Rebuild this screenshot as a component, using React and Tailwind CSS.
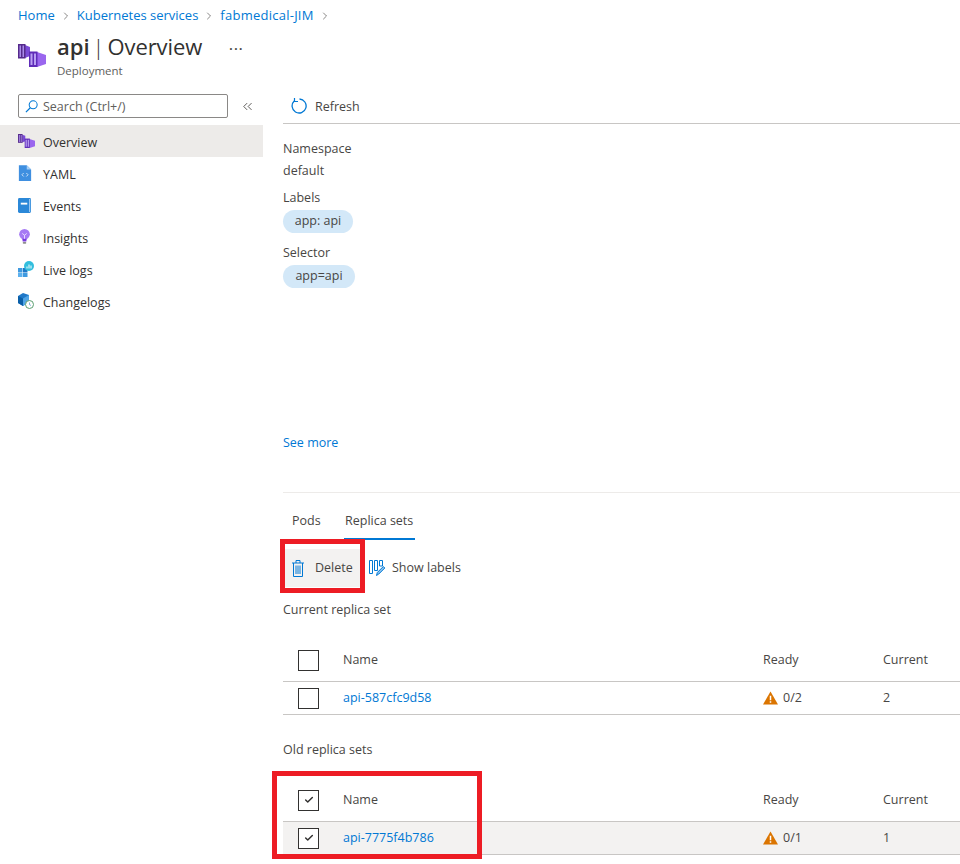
import React from "react";
import { ChevronRight, ChevronsLeft, Check } from "lucide-react";

const KubeIcon = ({ className }) => (
  <svg viewBox="0 0 28 23" className={className}>
    <path d="M7 1l5 2v9l-5 2z" fill="#7a4bd6" />
    <rect x="0" y="0" width="7.500" height="14.500" fill="#552a8c" />
    <path d="M1.500 1.500h1.500v11.500H1.500zM4.500 1.500h1.500v11.500H4.500z" fill="#a98bea" />
    <path d="M19 8l9 3v9l-9 3z" fill="#9a66ee" />
    <rect x="11" y="7.500" width="8.500" height="15.500" fill="#5f2cb8" />
    <path d="M12.500 9.500h2v11.500h-2zM16 9.500h2v11.500h-2z" fill="#b9a0f2" />
  </svg>
);

const YamlIcon = () => (
  <svg viewBox="0 0 16 18" className="w-[14px] h-4">
    <path d="M1 0h9l5 5v13H1z" fill="#3f8fe0" />
    <path d="M10 0l5 5h-5z" fill="#a8d0f5" />
    <path d="M6.500 9l-2 2 2 2M9.500 9l2 2-2 2" fill="none" stroke="#fff" strokeWidth="0.8" />
  </svg>
);

const EventsIcon = () => (
  <svg viewBox="0 0 14 16" className="w-[13px] h-[15px]">
    <rect x="0" y="0" width="14" height="16" rx="1.500" fill="#2b88d8" />
    <rect x="12" y="1" width="1.200" height="14" fill="#a8d0f5" />
    <rect x="3" y="5" width="7" height="2" fill="#fff" />
  </svg>
);

const InsightsIcon = () => (
  <svg viewBox="0 0 14 18" className="w-[13px] h-4">
    <circle cx="7" cy="6" r="6" fill="#a67af4" />
    <path d="M4.500 11h5l-.5 3H5z" fill="#773adc" />
    <rect x="5" y="14.500" width="4" height="2" rx="1" fill="#8c8c8c" />
    <path d="M4.500 5l2.500 2 2.500-2M7 7v4" fill="none" stroke="#f0e6ff" strokeWidth="1" />
  </svg>
);

const LiveLogsIcon = () => (
  <svg viewBox="0 0 16 16" className="w-4 h-4">
    <rect x="0" y="7" width="4.500" height="4.500" fill="#3f9ae0" />
    <rect x="5" y="7" width="4.500" height="4.500" fill="#1f78c8" />
    <rect x="0" y="12" width="4.500" height="4" fill="#5db1ee" />
    <rect x="5" y="12" width="4.500" height="4" fill="#3f9ae0" />
    <circle cx="11" cy="5" r="5" fill="#32bedd" />
    <path d="M9 7.500v-2M11 7.500v-4M13 7.500v-3" stroke="#fff" strokeWidth="1" />
  </svg>
);

const ChangelogsIcon = () => (
  <svg viewBox="0 0 16 16" className="w-4 h-4">
    <path d="M0 3l5-3 6 2v7l-6 4-5-3z" fill="#1f78c8" />
    <path d="M5 5.500l6-3.500v7l-6 4z" fill="#50a5e6" />
    <path d="M0 3l5 2.500v7.500l-5-3z" fill="#0a5fa8" />
    <circle cx="11.500" cy="11.500" r="4" fill="#fff" stroke="#5a9e6f" strokeWidth="1" />
    <path d="M11.500 9.500v2.200l1.500 .8" fill="none" stroke="#5e9fd0" strokeWidth="0.8" />
  </svg>
);

const SearchGlass = () => (
  <svg viewBox="0 0 14 14" className="w-[13px] h-[13px] text-[#0078d4]" fill="none" stroke="currentColor" strokeWidth="1.100">
    <circle cx="8.800" cy="5.200" r="4.300" />
    <path d="M5.700 8.300L1 13" strokeWidth="1.300" />
  </svg>
);

const RefreshIcon = () => (
  <svg viewBox="0 0 17 17" className="w-[17px] h-[17px] text-[#0078d4]" fill="none" stroke="currentColor" strokeWidth="1.300">
    <path d="M8.500 2A7 7 0 1 1 3.200 4" />
    <path d="M3.500 1v3.500H7" strokeWidth="1.200" />
  </svg>
);

const TrashIcon = () => (
  <svg viewBox="0 0 12 17" className="w-3 h-[17px] text-[#0078d4]" fill="none" stroke="currentColor" strokeWidth="1">
    <path d="M0 3h12M4 3V.5h4V3M1.500 3v13.500h9V3" />
    <path d="M4 5.500v8.500M6 5.500v8.500M8 5.500v8.500" />
  </svg>
);

const ShowLabelsIcon = () => (
  <svg viewBox="0 0 16 16" className="w-4 h-4 text-[#0078d4]" fill="none" stroke="currentColor" strokeWidth="1">
    <path d="M.5 .5h3v13h-3zM5.500 .5h3v10h-3zM10.500 .5h3v5.500h-3z" />
    <path d="M7.500 15.500l.8-3 6-6 1.500 1.500-6 6z" fill="#8cc4f0" />
  </svg>
);

const navItems = [
  { label: "Overview", icon: <KubeIcon className="w-[17px] h-[14px]" />, active: true },
  { label: "YAML", icon: <YamlIcon /> },
  { label: "Events", icon: <EventsIcon /> },
  { label: "Insights", icon: <InsightsIcon /> },
  { label: "Live logs", icon: <LiveLogsIcon /> },
  { label: "Changelogs", icon: <ChangelogsIcon /> },
];

const Checkbox = ({ checked }) => (
  <span className="w-[21px] h-[21px] border border-[#323130] flex items-center justify-center bg-white shrink-0">
    {checked && <Check size={10} strokeWidth={3.5} className="text-[#323130]" />}
  </span>
);

const WarningIcon = () => (
  <svg viewBox="0 0 16 14" className="w-[15px] h-[14px]">
    <path d="M8 0l8 14H0z" fill="#db7500" />
    <path d="M7.200 4.500h1.600v5H7.200zM7.200 10.500h1.600v1.600H7.200z" fill="#fff" />
  </svg>
);

const ReplicaTable = ({ name, ready, current, checked }) => (
  <div>
    <div className="h-[43px] flex items-center border-b border-[#c8c6c4] pl-[15px] font-medium text-[#484644]">
      <Checkbox checked={checked} />
      <span className="ml-6 w-[420px]">Name</span>
      <span className="w-[120px]">Ready</span>
      <span>Current</span>
    </div>
    <div className={`h-[33px] flex items-center border-b border-[#c8c6c4] pl-[15px] ${checked ? "bg-[#f3f2f1]" : ""}`}>
      <Checkbox checked={checked} />
      <a className={`ml-6 w-[420px] text-[#0078d4] ${checked ? "font-medium" : ""}`}>{name}</a>
      <span className="w-[120px] flex items-center gap-[5px] text-[#484644]">
        <WarningIcon />
        {ready}
      </span>
      <span className="text-[#484644]">{current}</span>
    </div>
  </div>
);

export default function App() {
  return (
    <div className="relative w-[960px] h-[864px] overflow-hidden bg-white text-[12.500px] text-[#323130] font-['Open_Sans','Noto_Sans',sans-serif]">
      {/* breadcrumb */}
      <div className="h-[32px] pl-[18px] flex items-center gap-[5px] text-[13px] text-[#0078d4]">
        <a>Home</a>
        <ChevronRight size={12} strokeWidth={1.3} className="text-[#484644]" />
        <a>Kubernetes services</a>
        <ChevronRight size={12} strokeWidth={1.3} className="text-[#484644]" />
        <a className="tracking-[0.25px]">fabmedical-JIM</a>
        <ChevronRight size={12} strokeWidth={1.3} className="text-[#484644]" />
      </div>

      {/* title */}
      <div className="h-[50px] pl-[18px] flex items-start">
        <KubeIcon className="w-[28px] h-[23px] mt-[12px]" />
        <div className="ml-[11px] -mt-[1px]">
          <div className="text-[22px] leading-[30px] text-[#323130] flex">
            <span className="font-semibold">api</span>
            <span className="mx-[3px] font-light">|</span>
            <span className="tracking-[-0.1px]">Overview</span>
          </div>
          <div className="text-[11.500px] leading-[16px] mt-[2px] text-[#605e5c]">Deployment</div>
        </div>
        <span className="ml-[27px] mt-[2px] text-[14px] font-semibold text-[#484644] tracking-[1px]">...</span>
      </div>

      <div className="flex">
        {/* sidebar */}
        <div className="w-[263px] shrink-0 pt-[12px]">
          <div className="flex items-center pl-[18px] mb-[7px]">
            <div className="w-[210px] h-[24px] border border-[#8a8886] rounded-[2px] flex items-center pl-[6px] gap-[5px] text-[#605e5c]">
              <SearchGlass />
              <span className="pt-[3px]">Search (Ctrl+/)</span>
            </div>
            <ChevronsLeft size={15} strokeWidth={1.4} className="ml-[12px] text-[#484644]" />
          </div>
          {navItems.map((item) => (
            <div
              key={item.label}
              className={`h-[32px] flex items-center pl-[18px] ${item.active ? "bg-[#edebe9]" : ""}`}
            >
              <span className="w-[25px] flex items-center">{item.icon}</span>
              <span className="pt-[5px]">{item.label}</span>
            </div>
          ))}
        </div>

        {/* main */}
        <div className="flex-1 pl-[20px] min-w-0">
          <div className="h-[32px] mt-[10px] border-b border-[#c8c6c4] flex items-center pl-[8px] pb-[4px]">
            <RefreshIcon />
            <span className="ml-[7px] pt-[4px] text-[#484644]">Refresh</span>
          </div>

          <div className="mt-[16px] leading-[18px] font-medium text-[#484644]">Namespace</div>
          <div className="mt-[4px] leading-[18px] text-[#484644]">default</div>
          <div className="mt-[9px] leading-[18px] font-medium text-[#484644]">Labels</div>
          <div className="mt-[3px] w-[70px] h-[23px] rounded-full bg-[#d3e8f8] flex items-center justify-center text-[#484644]">app: api</div>
          <div className="mt-[11px] leading-[18px] font-medium text-[#484644]">Selector</div>
          <div className="mt-[3px] w-[72px] h-[23px] rounded-full bg-[#d3e8f8] flex items-center justify-center text-[#484644]">app=api</div>

          <a className="block mt-[146px] leading-[18px] text-[#0078d4]">See more</a>

          <div className="mt-[40px] border-t border-[#edebe9]" />

          {/* tabs */}
          <div className="h-[47px] flex items-end pl-[9px]">
            <span className="h-[28px] text-[#484644]">Pods</span>
            <span className="ml-[23px] h-[28px] w-[71px] border-b-2 border-[#0078d4] font-medium text-[#484644] text-center">Replica sets</span>
          </div>

          {/* command bar */}
          <div className="mt-[9px] h-[38px] flex items-center">
            <div className="w-[77px] h-full bg-[#f3f2f1] flex items-center pl-[9px]">
              <TrashIcon />
              <span className="ml-[11px] pt-[1px] text-[#484644]">Delete</span>
            </div>
            <span className="ml-[9px] flex">
              <ShowLabelsIcon />
            </span>
            <span className="ml-[7px] pt-[1px] text-[#484644]">Show labels</span>
          </div>

          <div className="mt-[14px] leading-[18px] font-medium text-[#484644]">Current replica set</div>
          <div className="mt-[20px]">
            <ReplicaTable name="api-587cfc9d58" ready="0/2" current="2" />
          </div>

          <div className="mt-[26px] leading-[18px] font-medium text-[#484644]">Old replica sets</div>
          <div className="mt-[20px]">
            <ReplicaTable name="api-7775f4b786" ready="0/1" current="1" checked />
          </div>
        </div>
      </div>

      {/* red highlight boxes */}
      <div className="absolute left-[280px] top-[539px] w-[85px] h-[54px] border-[5px] border-[#ed1c24]" />
      <div className="absolute left-[272px] top-[771px] w-[210px] h-[88px] border-[5px] border-[#ed1c24]" />
    </div>
  );
}
